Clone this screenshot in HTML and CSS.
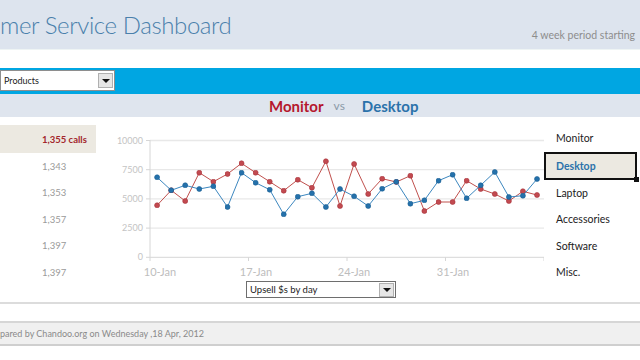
FILE: index.html
```html
<!DOCTYPE html>
<html>
<head>
<meta charset="utf-8">
<link rel="stylesheet" href="styles.css">
</head>
<body>
<div class="page">
  <header class="top">
    <h1 class="title">mer Service Dashboard</h1>
    <div class="period">4 week period starting</div>
  </header>
  <div class="gap"></div>
  <div class="bluebar">
    <div class="select products"><span class="label">Products</span><span class="arrow"></span></div>
  </div>
  <div class="band"><span class="mon">Monitor</span><span class="vs">vs</span><span class="desk">Desktop</span></div>
  <div class="main">
    <ul class="calls">
      <li class="hi">1,355 calls</li>
      <li>1,343</li>
      <li>1,353</li>
      <li>1,357</li>
      <li>1,397</li>
      <li>1,397</li>
    </ul>
    <svg class="chart" viewBox="96 117 448 164" xmlns="http://www.w3.org/2000/svg">
      <defs>
        <marker id="mr" viewBox="0 0 6 6" refX="3" refY="3" markerWidth="6" markerHeight="6" markerUnits="userSpaceOnUse">
          <circle cx="3" cy="3" r="2.5" fill="#c24a50" stroke="#a8323a" stroke-width="0.6"/>
        </marker>
        <marker id="mb" viewBox="0 0 6 6" refX="3" refY="3" markerWidth="6" markerHeight="6" markerUnits="userSpaceOnUse">
          <circle cx="3" cy="3" r="2.5" fill="#2471ab" stroke="#1b5f93" stroke-width="0.6"/>
        </marker>
      </defs>
      <g class="grid">
        <line x1="150" y1="140.5" x2="544" y2="140.5"/>
        <line x1="150" y1="169.7" x2="544" y2="169.7"/>
        <line x1="150" y1="198.9" x2="544" y2="198.9"/>
        <line x1="150" y1="228.1" x2="544" y2="228.1"/>
      </g>
      <g class="axis">
        <line x1="150" y1="140" x2="150" y2="257.3"/>
        <line x1="146" y1="257.3" x2="544" y2="257.3"/>
        <line x1="146" y1="140.5" x2="150" y2="140.5"/>
        <line x1="146" y1="169.7" x2="150" y2="169.7"/>
        <line x1="146" y1="198.9" x2="150" y2="198.9"/>
        <line x1="146" y1="228.1" x2="150" y2="228.1"/>
        <line x1="150" y1="257.3" x2="150" y2="261"/>
        <line x1="248.5" y1="257.3" x2="248.5" y2="261"/>
        <line x1="347" y1="257.3" x2="347" y2="261"/>
        <line x1="445.5" y1="257.3" x2="445.5" y2="261"/>
        <line x1="544" y1="257.3" x2="544" y2="261"/>
      </g>
      <g class="ylab">
        <text x="143" y="143.5">10000</text>
        <text x="143" y="172.7">7500</text>
        <text x="143" y="201.9">5000</text>
        <text x="143" y="231.1">2500</text>
        <text x="143" y="260.3">0</text>
      </g>
      <g class="xlab">
        <text x="160" y="276">10-Jan</text>
        <text x="256" y="276">17-Jan</text>
        <text x="354" y="276">24-Jan</text>
        <text x="453" y="276">31-Jan</text>
      </g>
      <polyline class="red" points="157.1,205.3 171.2,190.3 185.2,201 199.3,172.7 213.4,181.7 227.5,174 241.5,163.3 255.6,172.7 269.7,181.7 283.7,190.7 297.8,179.7 311.9,187.7 325.9,161.3 340,206 354.1,164 368.2,194 382.2,178.7 396.3,182 410.4,175.7 424.4,211 438.5,202 452.6,202 466.6,180.7 480.7,189 494.8,194 508.9,201 522.9,191.3 537,195"/>
      <polyline class="blue" points="157.1,177.3 171.2,190.3 185.2,185.3 199.3,189 213.4,186.3 227.5,207 241.5,172.7 255.6,182.7 269.7,189.7 283.7,214.3 297.8,196.7 311.9,193.3 325.9,207 340,189 354.1,196.3 368.2,206 382.2,188.7 396.3,181.7 410.4,203.7 424.4,200.3 438.5,180.7 452.6,174.7 466.6,198.3 480.7,185.3 494.8,172 508.9,197 522.9,195.7 537,179"/>
    </svg>
    <ul class="cats">
      <li>Monitor</li>
      <li class="sel">Desktop</li>
      <li>Laptop</li>
      <li>Accessories</li>
      <li>Software</li>
      <li>Misc.</li>
    </ul>
  </div>
  <div class="controls">
    <div class="select upsell"><span class="label">Upsell $s by day</span><span class="arrow"></span></div>
  </div>
  <div class="rule"></div>
  <footer class="foot">pared by Chandoo.org on Wednesday ,18 Apr, 2012</footer>
</div>
</body>
</html>
```
FILE: styles.css
```css
html, body {
  margin: 0;
  padding: 0;
  background: #fff;
}
body {
  font-family: Lato, "Open Sans", "DejaVu Sans", sans-serif;
  width: 640px;
  height: 360px;
  overflow: hidden;
}
.page {
  width: 640px;
}
.top {
  height: 50px;
  background: #dde4ee;
  display: flex;
  justify-content: space-between;
  align-items: flex-start;
  border-bottom: 1px solid #eef4f4;
  box-sizing: border-box;
}
.title {
  margin: 0;
  font-weight: 300;
  font-size: 24px;
  line-height: 1;
  color: #4a80ab;
  padding-top: 13px;
  letter-spacing: -0.4px;
}
.period {
  font-size: 10.5px;
  color: #8d8d8d;
  padding-top: 29px;
  padding-right: 5px;
}
.gap {
  height: 18px;
}
.bluebar {
  height: 26px;
  background: #00a6e2;
  padding-top: 2px;
  box-sizing: border-box;
}
.select {
  display: flex;
  align-items: center;
  background: #fff;
  border: 1px solid #8e8e8e;
  box-sizing: border-box;
}
.products {
  width: 115px;
  height: 21px;
}
.select .label {
  flex: 1;
  font-size: 9px;
  padding-left: 3px;
  color: #222;
}
.arrow {
  width: 15px;
  height: 15px;
  background: #e6e6e6;
  border: 1px solid #b0b0b0;
  margin-right: 1px;
  display: flex;
  align-items: center;
  justify-content: center;
  box-sizing: border-box;
}
.arrow::after {
  content: "";
  border-left: 4px solid transparent;
  border-right: 4px solid transparent;
  border-top: 4px solid #111;
}
.band {
  height: 23px;
  background: #dfe5ee;
  display: flex;
  align-items: center;
  padding-left: 269px;
  font-weight: 700;
  font-size: 15px;
}
.mon {
  color: #b5172d;
}
.vs {
  color: #8c9aa8;
  font-weight: 400;
  font-size: 12px;
  margin: 0 17px 0 10px;
}
.desk {
  color: #2b72aa;
}
.main {
  display: flex;
  height: 164px;
}
.calls {
  width: 96px;
  flex: none;
  margin: 8px 0 0;
  padding: 0;
  list-style: none;
}
.calls li {
  height: 26.5px;
  display: flex;
  align-items: center;
  padding-left: 42px;
  font-size: 9.5px;
  color: #9a9a9a;
}
.calls li.hi {
  height: 28px;
  background: #ece9e1;
  color: #a3272c;
  font-weight: 700;
}
.chart {
  width: 448px;
  height: 164px;
  flex: none;
}
.grid line {
  stroke: #e8e8e8;
  stroke-width: 1.3;
}
.axis line {
  stroke: #d6d6d6;
  stroke-width: 1;
}
.ylab text {
  font-family: Lato, "Open Sans", sans-serif;
  font-size: 9px;
  fill: #c4c4c4;
  text-anchor: end;
}
.xlab text {
  font-family: Lato, "Open Sans", sans-serif;
  font-size: 11px;
  fill: #bdbdbd;
  text-anchor: middle;
}
.red {
  fill: none;
  stroke: #c0504d;
  stroke-width: 1;
  marker-start: url(#mr);
  marker-mid: url(#mr);
  marker-end: url(#mr);
}
.blue {
  fill: none;
  stroke: #3c87bf;
  stroke-width: 1;
  marker-start: url(#mb);
  marker-mid: url(#mb);
  marker-end: url(#mb);
}
.cats {
  width: 96px;
  flex: none;
  margin: 8px 0 0;
  padding: 0;
  list-style: none;
}
.cats li {
  height: 26.5px;
  display: flex;
  align-items: center;
  padding-left: 12px;
  font-size: 10.5px;
  color: #222;
}
.cats li.sel {
  position: relative;
  width: 93px;
  height: 28px;
  box-sizing: border-box;
  border: 2px solid #111;
  background: #ece9e1;
  color: #2b72aa;
  font-weight: 700;
  padding-left: 10px;
}
.cats li.sel::after {
  content: "";
  position: absolute;
  right: -4px;
  bottom: -4px;
  width: 5px;
  height: 5px;
  background: #111;
}
.controls {
  height: 17px;
  padding-left: 246px;
}
.upsell {
  width: 150px;
  height: 17px;
  border-color: #6e6e6e;
}
.upsell .label {
  font-size: 9.5px;
}
.upsell .arrow {
  height: 14px;
}
.rule {
  margin-top: 4px;
  height: 2px;
  background: #dcdcdc;
}
.foot {
  margin-top: 17px;
  height: 25px;
  box-sizing: border-box;
  background: #f0f0f0;
  border-top: 2px solid #d6d6d6;
  border-bottom: 2px solid #cfcfcf;
  font-size: 9px;
  color: #8a8a8a;
  display: flex;
  align-items: center;
}
```
